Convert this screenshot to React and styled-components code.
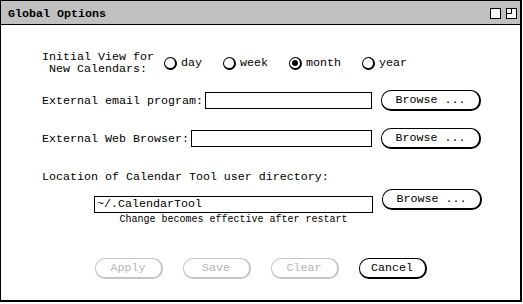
import React from 'react';
import styled, { createGlobalStyle } from 'styled-components';

const GlobalStyle = createGlobalStyle`
  body {
    margin: 0;
    background: #fff;
    font-family: 'Liberation Mono', monospace;
  }
`;

const Window = styled.div`
  width: 522px;
  height: 302px;
  box-sizing: border-box;
  border: 1px solid #000;
  border-right-width: 2px;
  border-bottom-width: 2px;
  background: #fff;
  display: flex;
  flex-direction: column;
`;

const TitleBar = styled.div`
  height: 23px;
  background: #c0c0c0;
  border-bottom: 1px solid #000;
  display: flex;
  align-items: center;
  padding: 0 3px 0 7px;
`;

const Title = styled.span`
  flex: 1;
  font-weight: bold;
  font-size: 11.67px;
  color: #000;
  padding-top: 2px;
`;

const TitleIcons = styled.div`
  display: flex;
  gap: 5px;
  margin-top: 2px;
`;

const Content = styled.div`
  flex: 1;
  display: flex;
  flex-direction: column;
  padding-left: 41px;
  font-size: 11.67px;
  color: #000;
`;

const ViewRow = styled.div`
  display: flex;
  align-items: center;
  margin-top: 26px;
`;

const StackLabel = styled.div`
  text-align: center;
  line-height: 12px;
  margin-right: 10px;
`;

const RadioGroup = styled.div`
  display: flex;
  align-items: center;
  gap: 21px;
`;

const RadioItem = styled.label`
  display: flex;
  align-items: center;
  gap: 4px;
`;

const RadioCircle = styled.span`
  width: 13px;
  height: 13px;
  box-sizing: border-box;
  border: 1px solid #000;
  border-right-width: 2px;
  border-bottom-width: 2px;
  border-radius: 50%;
  display: flex;
  align-items: center;
  justify-content: center;
  &::after {
    content: '';
    width: 6px;
    height: 6px;
    border-radius: 50%;
    background: ${p => (p.$checked ? '#000' : 'transparent')};
  }
`;

const FieldRow = styled.div`
  display: flex;
  align-items: center;
  width: 439px;
  height: 21px;
  margin-top: ${p => p.$gap}px;
`;

const FieldLabel = styled.span`
  white-space: nowrap;
  margin-right: 2px;
`;

const TextBox = styled.div`
  flex: 1;
  height: 17px;
  box-sizing: border-box;
  border: 1px solid #000;
  background: #fff;
  padding-left: 2px;
  line-height: 15px;
  white-space: nowrap;
`;

const PillButton = styled.button`
  font-family: 'Liberation Mono', monospace;
  font-size: 11.67px;
  width: ${p => p.$w}px;
  height: 21px;
  box-sizing: border-box;
  margin-left: ${p => p.$ml || 0}px;
  padding: 0;
  background: #fff;
  color: ${p => (p.disabled ? '#b4b4b4' : '#000')};
  border: 1px solid ${p => (p.disabled ? '#c4c4c4' : '#000')};
  border-right-width: 2px;
  border-bottom-width: 2px;
  border-radius: 10px;
  flex-shrink: 0;
`;

const SectionLabel = styled.div`
  margin-top: 21px;
  line-height: 14px;
`;

const DirRow = styled.div`
  display: flex;
  align-items: flex-start;
  margin-top: 5px;
`;

const DirColumn = styled.div`
  width: 279px;
  margin-left: 52px;
  margin-top: 7px;
  display: flex;
  flex-direction: column;
`;

const Caption = styled.div`
  font-size: 10px;
  line-height: 12px;
  text-align: center;
  margin-top: 1px;
`;

const ActionBar = styled.div`
  display: flex;
  justify-content: center;
  gap: 20px;
  margin: 32px 0 0 -41px;
`;

const WinIcon = ({ max }) => (
  <svg width="11" height="11" viewBox="0 0 11 11">
    <rect x="0.5" y="0.5" width="10" height="10" fill="#fff" stroke="#000" />
    {max && <path d="M5.5 0.5 V5.5 H0.5" fill="none" stroke="#000" />}
  </svg>
);

const views = ['day', 'week', 'month', 'year'];

export default function App() {
  return (
    <>
      <GlobalStyle />
      <Window>
        <TitleBar>
          <Title>Global Options</Title>
          <TitleIcons>
            <WinIcon />
            <WinIcon max />
          </TitleIcons>
        </TitleBar>
        <Content>
          <ViewRow>
            <StackLabel>
              Initial View for
              <br />
              New Calendars:
            </StackLabel>
            <RadioGroup>
              {views.map(v => (
                <RadioItem key={v}>
                  <RadioCircle $checked={v === 'month'} />
                  {v}
                </RadioItem>
              ))}
            </RadioGroup>
          </ViewRow>

          <FieldRow $gap={15}>
            <FieldLabel>External email program:</FieldLabel>
            <TextBox />
            <PillButton $w={100} $ml={9}>Browse ...</PillButton>
          </FieldRow>

          <FieldRow $gap={17}>
            <FieldLabel>External Web Browser:</FieldLabel>
            <TextBox />
            <PillButton $w={100} $ml={9}>Browse ...</PillButton>
          </FieldRow>

          <SectionLabel>Location of Calendar Tool user directory:</SectionLabel>

          <DirRow>
            <DirColumn>
              <TextBox>~/.CalendarTool</TextBox>
              <Caption>Change becomes effective after restart</Caption>
            </DirColumn>
            <PillButton $w={100} $ml={9}>Browse ...</PillButton>
          </DirRow>

          <ActionBar>
            <PillButton $w={68} disabled>Apply</PillButton>
            <PillButton $w={68} disabled>Save</PillButton>
            <PillButton $w={68} disabled>Clear</PillButton>
            <PillButton $w={68}>Cancel</PillButton>
          </ActionBar>
        </Content>
      </Window>
    </>
  );
}
